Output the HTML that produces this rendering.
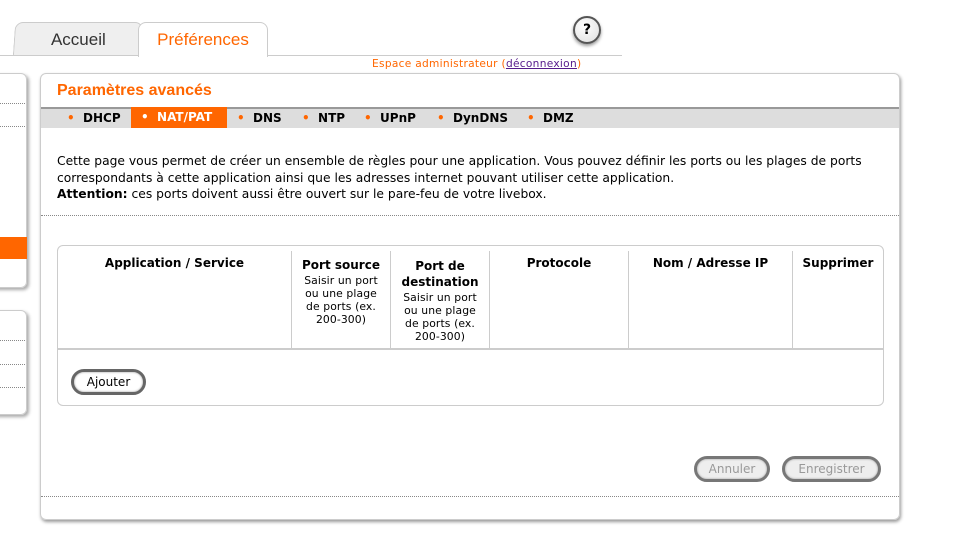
<!DOCTYPE html><html><head><meta charset="utf-8"><style>
*{margin:0;padding:0;box-sizing:border-box}
body{width:960px;height:547px;background:#fff;position:relative;overflow:hidden;font-family:"DejaVu Sans","Liberation Sans",sans-serif;color:#000}
.a{position:absolute}
.dot{position:absolute;border-top:1px dotted #888;height:0}
.tab{position:absolute;top:22px;height:34px;border:1px solid #ccc;border-bottom:none;border-radius:8px 8px 0 0;font-family:"Liberation Sans",sans-serif;font-size:17px;text-align:center;line-height:33px}
.btn{position:absolute;border:3px solid #666;border-radius:14px;background:#fff;font-size:12px;text-align:center;box-shadow:inset 0 0 2px #999}
.sub{font-size:10.8px;font-weight:normal;line-height:13px;letter-spacing:0.1px}
</style></head><body>
<div class="tab" style="left:14px;width:128px;background:#efefef;color:#333;transform:skewX(-4deg)"><span style="display:inline-block;transform:skewX(4deg)">Accueil</span></div>
<div class="tab" style="left:138px;width:130px;background:#fff;color:#f60;height:35px;z-index:2">Préférences</div>
<div class="a" style="left:0;top:55px;width:622px;border-top:1px solid #ccc"></div>
<div class="a" style="left:573px;top:16px;width:28px;height:28px;border-radius:50%;border:2px solid #555;background:radial-gradient(circle at 40% 35%,#fff,#ddd);box-shadow:0 2px 3px #999;font-weight:bold;font-size:14px;text-align:center;line-height:24px">?</div>
<div class="a" style="left:372px;top:58px;font-size:10.6px;color:#f60;letter-spacing:0.3px">Espace administrateur (<span style="color:#551a8b;text-decoration:underline">déconnexion</span>)</div>
<!-- sidebar -->
<div class="a" style="left:-10px;top:73px;width:37px;height:215px;border:1px solid #ccc;border-radius:6px;box-shadow:2px 2px 3px #aaa"></div>
<div class="dot" style="left:0;top:103px;width:25px"></div>
<div class="dot" style="left:0;top:126px;width:25px"></div>
<div class="a" style="left:0;top:237px;width:27px;height:22px;background:#f60"></div>
<div class="a" style="left:-10px;top:310px;width:37px;height:105px;border:1px solid #ccc;border-radius:6px;box-shadow:2px 2px 3px #aaa"></div>
<div class="dot" style="left:0;top:340px;width:25px"></div>
<div class="dot" style="left:0;top:364px;width:25px"></div>
<div class="dot" style="left:0;top:387px;width:25px"></div>
<!-- main -->
<div class="a" style="left:40px;top:73px;width:860px;height:447px;border:1px solid #ccc;border-radius:6px;box-shadow:1px 2px 3px #999"></div>
<div class="a" style="left:57px;top:82px;font-family:'Liberation Sans',sans-serif;font-weight:bold;font-size:16px;color:#f60">Paramètres avancés</div>
<div class="a" style="left:41px;top:107px;width:858px;height:21px;background:#ddd;border-top:2px solid #999;font-size:12px;font-weight:bold;line-height:19px">
<span class="a" style="left:26px"><span style="color:#f60">•</span>&nbsp; DHCP</span>
<span class="a" style="left:90px;top:-2px;height:21px;width:96px;background:#f60;color:#fff;padding-left:10px;line-height:21px">•&nbsp; NAT/PAT</span>
<span class="a" style="left:196px"><span style="color:#f60">•</span>&nbsp; DNS</span>
<span class="a" style="left:261px"><span style="color:#f60">•</span>&nbsp; NTP</span>
<span class="a" style="left:323px"><span style="color:#f60">•</span>&nbsp; UPnP</span>
<span class="a" style="left:396px"><span style="color:#f60">•</span>&nbsp; DynDNS</span>
<span class="a" style="left:486px"><span style="color:#f60">•</span>&nbsp; DMZ</span>
</div>
<div class="a" style="left:57px;top:153px;width:840px;font-size:12.3px;line-height:16.5px">Cette page vous permet de créer un ensemble de règles pour une application. Vous pouvez définir les ports ou les plages de ports correspondants à cette application ainsi que les adresses internet pouvant utiliser cette application.<br><b>Attention:</b> ces ports doivent aussi être ouvert sur le pare-feu de votre livebox.</div>
<div class="dot" style="left:41px;top:215px;width:858px"></div>
<div class="a" style="left:57px;top:245px;width:827px;height:161px;border:1px solid #ccc;border-radius:6px"></div>
<div class="a" style="left:57px;top:348px;width:827px;border-top:2px solid #ccc"></div>
<div class="a" style="left:291px;top:251px;height:97px;border-left:1px solid #ccc"></div>
<div class="a" style="left:390px;top:251px;height:97px;border-left:1px solid #ccc"></div>
<div class="a" style="left:489px;top:251px;height:97px;border-left:1px solid #ccc"></div>
<div class="a" style="left:628px;top:251px;height:97px;border-left:1px solid #ccc"></div>
<div class="a" style="left:792px;top:251px;height:97px;border-left:1px solid #ccc"></div>
<div class="a" style="left:58px;top:256px;width:233px;text-align:center;font-size:12px;font-weight:bold">Application / Service</div>
<div class="a" style="left:292px;top:258px;width:98px;text-align:center;font-size:12px;font-weight:bold">Port source<div class="sub" style="margin-top:2px">Saisir un port<br>ou une plage<br>de ports (ex.<br>200-300)</div></div>
<div class="a" style="left:391px;top:258px;width:98px;text-align:center;font-size:12px;font-weight:bold;line-height:16px">Port de<br>destination<div class="sub" style="margin-top:1px">Saisir un port<br>ou une plage<br>de ports (ex.<br>200-300)</div></div>
<div class="a" style="left:490px;top:256px;width:138px;text-align:center;font-size:12px;font-weight:bold">Protocole</div>
<div class="a" style="left:629px;top:256px;width:163px;text-align:center;font-size:12px;font-weight:bold">Nom / Adresse IP</div>
<div class="a" style="left:793px;top:256px;width:90px;text-align:center;font-size:12px;font-weight:bold">Supprimer</div>
<div class="btn" style="left:71px;top:369px;width:75px;height:26px;line-height:20px">Ajouter</div>
<div class="btn" style="left:694px;top:456px;width:76px;height:26px;line-height:20px;background:#eee;color:#999;border-color:#777">Annuler</div>
<div class="btn" style="left:782px;top:456px;width:99px;height:26px;line-height:20px;background:#eee;color:#999;border-color:#777">Enregistrer</div>
<div class="dot" style="left:41px;top:496px;width:858px"></div>
</body></html>
